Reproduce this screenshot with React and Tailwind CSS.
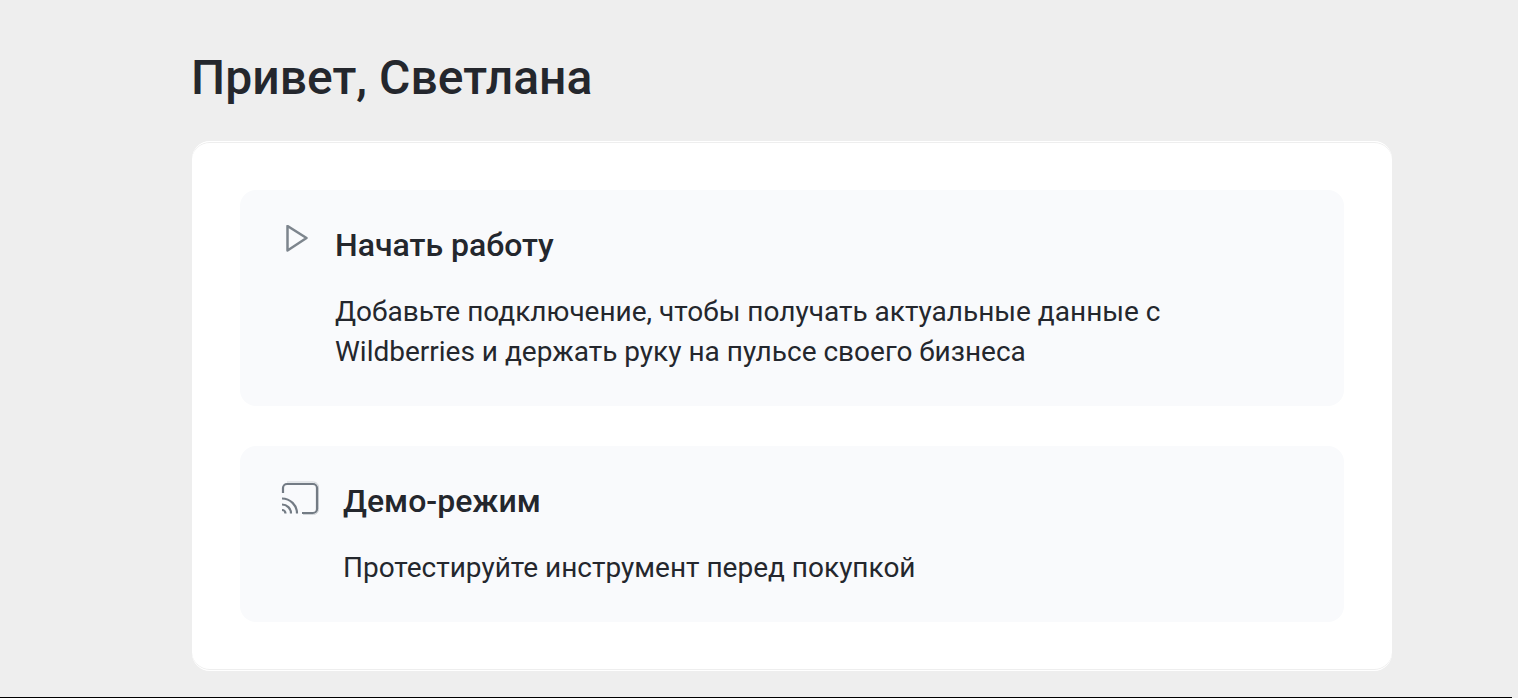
import React from 'react';

function PlayIcon() {
  return (
    <svg className="h-[30px] w-6 shrink-0" viewBox="0 0 24 30" fill="none" stroke="#7d858d" strokeWidth="2.5" strokeLinejoin="round">
      <path d="M2.5 1v24.5L21.5 13z" />
    </svg>
  );
}

function CastIcon() {
  return (
    <svg className="h-9 w-[38px] shrink-0" viewBox="0 0 38 36" fill="none" stroke="#737b84" strokeWidth="2.2">
      <path d="M6 1h26.5a5 5 0 0 1 5 5v22.5a5 5 0 0 1-5 5H22" stroke="#cfd3d7" strokeWidth="1" />
      <path d="M2 12V7a4 4 0 0 1 4-4h26a4 4 0 0 1 4 4v21a4 4 0 0 1-4 4H21" />
      <path d="M1 17.5a15 15 0 0 1 15 15M1 23.5a9 9 0 0 1 9 9M1 29a3.5 3.5 0 0 1 3.5 3.5" />
    </svg>
  );
}

function ActionCard({ icon, title, text, className }) {
  return (
    <button type="button" className={`flex w-full items-start rounded-2xl bg-[#f9fafc] text-left ${className}`}>
      {icon}
      <div>
        <h2 className="text-[32px] leading-10 font-medium">{title}</h2>
        <p className="mt-[27px] text-[28px] leading-10">{text}</p>
      </div>
    </button>
  );
}

export default function App() {
  return (
    <main className="flex h-[698px] flex-col overflow-hidden bg-[#eeeeee] font-['Roboto',sans-serif] text-[#24272d]">
      <div className="grow pt-[48px] pl-[192px]">
        <h1 className="-ml-px text-[48px] leading-[60px] font-medium tracking-[0.05px]">Привет, Светлана</h1>
        <section className="mt-[33px] flex h-[530px] w-[1200px] flex-col gap-10 rounded-[18px] border-y border-white bg-white px-12 pt-12 shadow-[inset_0_1px_0_#eeeeee,inset_0_-1px_0_#eeeeee]">
          <ActionCard
            className="h-[216px] gap-[26px] pt-[35px] pl-[45px]"
            icon={<PlayIcon />}
            title="Начать работу"
            text={<>Добавьте подключение, чтобы получать актуальные данные с<br />Wildberries и держать руку на пульсе своего бизнеса</>}
          />
          <ActionCard
            className="h-[176px] gap-6 pt-[35px] pl-[41px]"
            icon={<CastIcon />}
            title="Демо-режим"
            text="Протестируйте инструмент перед покупкой"
          />
        </section>
      </div>
      <div className="h-px w-[1512px] bg-black" />
    </main>
  );
}
